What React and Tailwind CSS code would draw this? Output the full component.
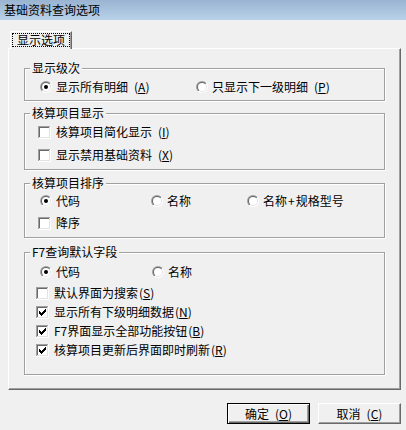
import React from "react";

function Radio({ checked }) {
  return (
    <svg width="12" height="12" viewBox="0 0 12 12" className="shrink-0">
      <defs>
        <linearGradient id="rOuter" x1="0" y1="0" x2="1" y2="1">
          <stop offset="0.5" stopColor="#a0a0a0" />
          <stop offset="0.5" stopColor="#ffffff" />
        </linearGradient>
        <linearGradient id="rInner" x1="0" y1="0" x2="1" y2="1">
          <stop offset="0.5" stopColor="#696969" />
          <stop offset="0.5" stopColor="#e3e3e3" />
        </linearGradient>
      </defs>
      <circle cx="6" cy="6" r="6" fill="url(#rOuter)" />
      <circle cx="6" cy="6" r="5" fill="url(#rInner)" />
      <circle cx="6" cy="6" r="4" fill="#ffffff" />
      {checked && <circle cx="6" cy="6" r="2" fill="#000000" />}
    </svg>
  );
}

function Check({ checked }) {
  const marks = [
    [3, 5], [4, 6], [5, 7], [6, 6], [7, 5], [8, 4], [9, 3],
  ];
  return (
    <svg width="13" height="13" viewBox="0 0 13 13" shapeRendering="crispEdges" className="shrink-0">
      <rect x="0" y="0" width="13" height="13" fill="#ffffff" />
      <rect x="0" y="0" width="12" height="1" fill="#a0a0a0" />
      <rect x="0" y="0" width="1" height="12" fill="#a0a0a0" />
      <rect x="1" y="1" width="10" height="1" fill="#696969" />
      <rect x="1" y="1" width="1" height="10" fill="#696969" />
      <rect x="11" y="1" width="1" height="11" fill="#e3e3e3" />
      <rect x="1" y="11" width="11" height="1" fill="#e3e3e3" />
      {checked &&
        marks.map(([x, y]) => (
          <rect key={x} x={x} y={y} width="1" height="3" fill="#000000" />
        ))}
    </svg>
  );
}

function Key({ k, spaced }) {
  return (
    <span className={spaced ? "ml-[6px]" : "ml-[1px]"}>
      (<span className="underline underline-offset-1">{k}</span>)
    </span>
  );
}

function Group({ title, className, children }) {
  return (
    <fieldset
      className={
        "border border-[#a0a0a0] shadow-[inset_1px_1px_0_#ffffff,1px_1px_0_#ffffff] " +
        (className || "")
      }
    >
      <legend className="ml-[5px] px-[2px] leading-[14px] bg-[#f0f0f0]">{title}</legend>
      {children}
    </fieldset>
  );
}

export default function App() {
  return (
    <div className="w-[406px] h-[430px] bg-[#f0f0f0] flex flex-col text-[12px] leading-[14px] text-black font-['Noto_Sans_CJK_SC','Noto_Sans',sans-serif] overflow-hidden">
      <div className="h-[20px] shrink-0 bg-gradient-to-b from-[#99b4d1] to-[#b9d1ea] pl-[4px] flex items-center">
        基础资料查询选项
      </div>

      <div className="pt-[11px] pl-[8px] pr-[5px] flex flex-col">
        <div className="flex pl-[2px]">
          <div className="relative z-10 -mb-[1px] w-[62px] h-[18px] bg-[#f0f0f0] border-l border-t border-white border-r border-r-[#696969] shadow-[inset_-1px_0_0_#a0a0a0] pl-[1px] pt-[1px]">
            <div className="w-[58px] h-[14px] border border-dotted border-black flex items-center justify-center">
              显示选项
            </div>
          </div>
        </div>

        <div className="h-[342px] border-l border-t border-white border-r border-b border-r-[#696969] border-b-[#696969] shadow-[inset_-1px_-1px_0_#a0a0a0] pt-[12px] pl-[15px] pr-[15px] flex flex-col">
          <Group title="显示级次">
            <div className="pt-[4px] pb-[5px] pl-[15px] flex">
              <div className="w-[156px] h-[16px] flex items-center gap-[4px]">
                <Radio checked />
                <span>
                  显示所有明细<Key k="A" spaced />
                </span>
              </div>
              <div className="h-[16px] flex items-center gap-[4px]">
                <Radio />
                <span>
                  只显示下一级明细<Key k="P" spaced />
                </span>
              </div>
            </div>
          </Group>

          <Group title="核算项目显示" className="mt-[5px]">
            <div className="pt-[4px] pb-[6px] pl-[13px] flex flex-col gap-[7px]">
              <div className="h-[16px] flex items-center gap-[5px]">
                <Check />
                <span>
                  核算项目简化显示<Key k="I" spaced />
                </span>
              </div>
              <div className="h-[16px] flex items-center gap-[5px]">
                <Check />
                <span>
                  显示禁用基础资料<Key k="X" spaced />
                </span>
              </div>
            </div>
          </Group>

          <Group title="核算项目排序" className="mt-[6px]">
            <div className="pt-[3px] pb-[6px] pl-[15px] flex flex-col gap-[6px]">
              <div className="flex">
                <div className="w-[111px] h-[16px] flex items-center gap-[4px]">
                  <Radio checked />
                  <span>代码</span>
                </div>
                <div className="w-[96px] h-[16px] flex items-center gap-[4px]">
                  <Radio />
                  <span>名称</span>
                </div>
                <div className="h-[16px] flex items-center gap-[4px]">
                  <Radio />
                  <span>
                    名称<span className="mx-[1px]">+</span>规格型号
                  </span>
                </div>
              </div>
              <div className="-ml-[2px] h-[16px] flex items-center gap-[5px]">
                <Check />
                <span>降序</span>
              </div>
            </div>
          </Group>

          <Group title="F7查询默认字段" className="mt-[7px]">
            <div className="pt-[5px] pb-[16px] pl-[15px] flex flex-col">
              <div className="flex">
                <div className="w-[112px] h-[16px] flex items-center gap-[4px]">
                  <Radio checked />
                  <span>代码</span>
                </div>
                <div className="h-[16px] flex items-center gap-[4px]">
                  <Radio />
                  <span>名称</span>
                </div>
              </div>
              <div className="-ml-[4px] mt-[5px] flex flex-col gap-[3px]">
                <div className="h-[16px] flex items-center gap-[5px]">
                  <Check />
                  <span>
                    默认界面为搜索<Key k="S" />
                  </span>
                </div>
                <div className="h-[16px] flex items-center gap-[5px]">
                  <Check checked />
                  <span>
                    显示所有下级明细数据<Key k="N" />
                  </span>
                </div>
                <div className="h-[16px] flex items-center gap-[5px]">
                  <Check checked />
                  <span>
                    F7界面显示全部功能按钮<Key k="B" />
                  </span>
                </div>
                <div className="h-[16px] flex items-center gap-[5px]">
                  <Check checked />
                  <span>
                    核算项目更新后界面即时刷新<Key k="R" />
                  </span>
                </div>
              </div>
            </div>
          </Group>
        </div>
      </div>

      <div className="mt-[13px] pr-[5px] flex justify-end gap-[8px]">
        <button className="w-[83px] h-[21px] bg-[#f0f0f0] border border-black shadow-[inset_1px_1px_0_#ffffff,inset_-1px_-1px_0_#696969,inset_-2px_-2px_0_#a0a0a0] flex items-center justify-center">
          确定<Key k="O" spaced />
        </button>
        <button className="w-[83px] h-[21px] bg-[#f0f0f0] border-l border-t border-white border-r border-b border-r-[#696969] border-b-[#696969] shadow-[inset_-1px_-1px_0_#a0a0a0] flex items-center justify-center">
          取消<Key k="C" spaced />
        </button>
      </div>
    </div>
  );
}
